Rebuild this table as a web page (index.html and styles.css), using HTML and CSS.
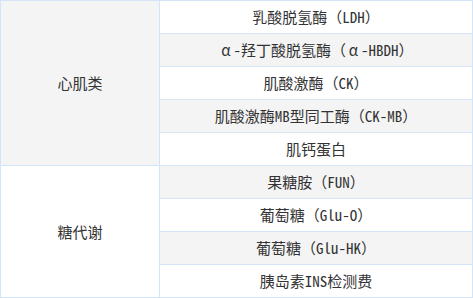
FILE: index.html
```html
<!DOCTYPE html>
<html>
<head>
<meta charset="utf-8">
<link rel="stylesheet" href="styles.css">
</head>
<body>
<table class="fee-table">
  <tbody>
    <tr>
      <th class="group group-shaded" rowspan="5">心肌类</th>
      <td>乳酸脱氢酶（LDH）</td>
    </tr>
    <tr class="alt"><td><span class="fw">α</span>-羟丁酸脱氢酶（<span class="fw">α</span>-HBDH）</td></tr>
    <tr><td>肌酸激酶（CK）</td></tr>
    <tr class="alt"><td>肌酸激酶MB型同工酶（CK-MB）</td></tr>
    <tr><td>肌钙蛋白</td></tr>
    <tr class="alt">
      <th class="group" rowspan="4">糖代谢</th>
      <td>果糖胺（FUN）</td>
    </tr>
    <tr><td>葡萄糖（Glu-O）</td></tr>
    <tr class="alt"><td>葡萄糖（Glu-HK）</td></tr>
    <tr><td>胰岛素INS检测费</td></tr>
  </tbody>
</table>
</body>
</html>
```
FILE: styles.css
```css
html, body {
  margin: 0;
  padding: 0;
  background: #fff;
}
.fee-table {
  border-collapse: collapse;
  width: 473px;
  table-layout: fixed;
  font-family: "Noto Sans Mono CJK SC", "Noto Sans CJK SC", monospace;
  font-size: 15px;
  color: #333;
}
.fee-table th,
.fee-table td {
  border: 1px solid #d3e5f6;
  height: 32px;
  padding: 0 4px;
  text-align: center;
  vertical-align: middle;
  font-weight: normal;
  line-height: 32px;
  white-space: nowrap;
}
.fee-table th {
  width: 150px;
  background: #fff;
}
.fee-table th.group-shaded {
  background: #f4f4f4;
}
.fee-table tr.alt td {
  background: #f4f4f4;
}
.fw {
  display: inline-block;
  width: 1em;
  text-align: center;
}
```
